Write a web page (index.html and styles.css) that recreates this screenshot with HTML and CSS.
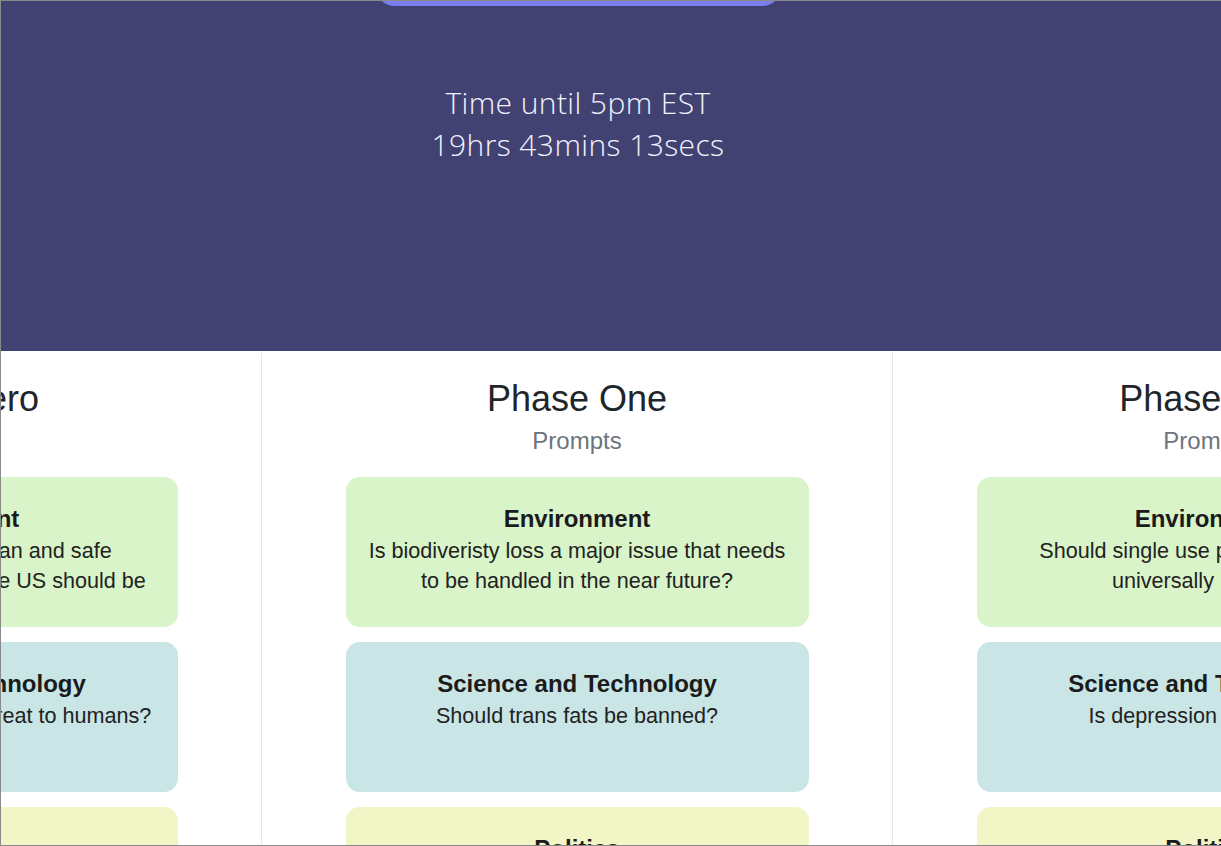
FILE: index.html
```html
<!DOCTYPE html>
<html lang="en">
<head>
<meta charset="utf-8">
<title>Phases</title>
<link rel="stylesheet" href="styles.css">
</head>
<body>
<div class="frame">
  <header class="hero">
    <div class="hero-btn"></div>
    <div class="countdown">
      <div class="countdown-line">Time until 5pm EST</div>
      <div class="countdown-line">19hrs 43mins 13secs</div>
    </div>
  </header>
  <div class="track">
    <section class="slide">
      <h2 class="phase-title">Phase Zero</h2>
      <div class="phase-sub">Prompts</div>
      <div class="card card-env">
        <div class="card-title">Environment</div>
        <div class="card-text">Do you believe that clean and safe<br>drinkable water for all in the US should be</div>
      </div>
      <div class="card card-sci">
        <div class="card-title">Science and Technology</div>
        <div class="card-text">Is Artificial Intelligence a threat to humans?</div>
      </div>
      <div class="card card-pol">
        <div class="card-title">Politics</div>
        <div class="card-text"></div>
      </div>
    </section>
    <section class="slide">
      <h2 class="phase-title">Phase One</h2>
      <div class="phase-sub">Prompts</div>
      <div class="card card-env">
        <div class="card-title">Environment</div>
        <div class="card-text">Is biodiveristy loss a major issue that needs<br>to be handled in the near future?</div>
      </div>
      <div class="card card-sci">
        <div class="card-title">Science and Technology</div>
        <div class="card-text">Should trans fats be banned?</div>
      </div>
      <div class="card card-pol">
        <div class="card-title">Politics</div>
        <div class="card-text"></div>
      </div>
    </section>
    <section class="slide">
      <h2 class="phase-title">Phase Two</h2>
      <div class="phase-sub">Prompts</div>
      <div class="card card-env">
        <div class="card-title">Environment</div>
        <div class="card-text">Should single use plastic bottles be<br>universally banned?</div>
      </div>
      <div class="card card-sci">
        <div class="card-title">Science and Technology</div>
        <div class="card-text">Is depression a disease?</div>
      </div>
      <div class="card card-pol">
        <div class="card-title">Politics</div>
        <div class="card-text"></div>
      </div>
    </section>
  </div>
</div>
</body>
</html>
```

FILE: styles.css
```css
html, body {
  margin: 0;
  padding: 0;
  background: #ffffff;
}

.frame {
  box-sizing: border-box;
  width: 1221px;
  height: 846px;
  border-top: 1px solid #8a8a8a;
  border-left: 1px solid #8a8a8a;
  border-bottom: 1px solid #8a8a8a;
  overflow: hidden;
  font-family: "Liberation Sans", Arial, sans-serif;
  color: #212529;
}

.hero {
  box-sizing: border-box;
  height: 350px;
  padding-right: 66px;
  background: #414272;
  display: flex;
  flex-direction: column;
  align-items: center;
}

.hero-btn {
  width: 407px;
  height: 40px;
  margin-top: -35px;
  background: #7b7fec;
  border-radius: 26px;
  flex: none;
}

.countdown {
  margin-top: 76px;
  text-align: center;
  font-family: "Open Sans", "Noto Sans", sans-serif;
  font-weight: 300;
  font-size: 30px;
  letter-spacing: 0.4px;
  line-height: 42px;
  color: #f2f2ff;
}

.track {
  display: flex;
  margin-left: -370px;
}

.slide {
  flex: none;
  width: 630px;
  border-right: 1px solid #e6e6e6;
  margin-top: 2px;
  padding-top: 24px;
  height: 600px;
  display: flex;
  flex-direction: column;
  align-items: center;
}

.phase-title {
  margin: 0;
  font-weight: 400;
  font-size: 36px;
  line-height: 43px;
  color: #212529;
}

.phase-sub {
  margin-top: 6px;
  font-size: 24px;
  line-height: 29px;
  color: #6c757d;
}

.card {
  box-sizing: border-box;
  width: 463px;
  height: 150px;
  margin-top: 15px;
  border-radius: 14px;
  padding-top: 27px;
  text-align: center;
  flex: none;
}

.phase-sub + .card {
  margin-top: 22px;
}

.card-env { background: #d9f4c8; }
.card-sci { background: #c9e5e5; }
.card-pol { background: #f2f5c6; }

.card-title {
  font-weight: 700;
  font-size: 24px;
  line-height: 29px;
  margin-bottom: 3px;
  color: #1b1b1b;
}

.card-text {
  font-size: 21.6px;
  line-height: 30px;
  color: #222222;
}
```
